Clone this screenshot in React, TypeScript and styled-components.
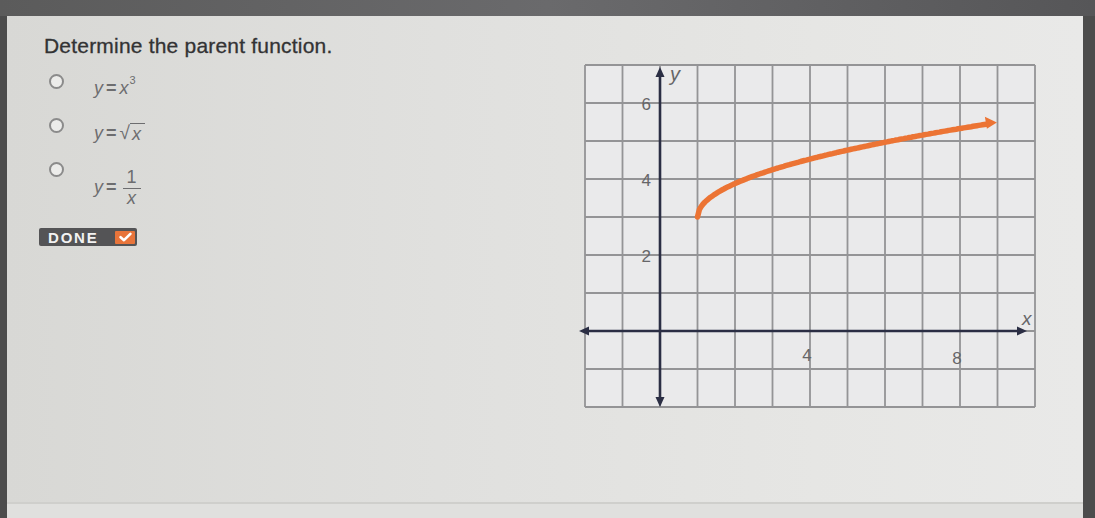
import React from 'react'
import styled, {createGlobalStyle} from 'styled-components'

const GlobalStyle = createGlobalStyle`
  html, body {
    margin: 0;
    padding: 0;
    background: #4a4a4a;
  }
  #root {
    height: 518px;
  }
`

const X0 = 7
const Y0 = 7
const UX = 37.5
const UY = 38

const px = (x: number) => X0 + (x + 2) * UX
const py = (y: number) => Y0 + (7 - y) * UY

// the curve as photographed sits a touch lower than sqrt(x - 1) + 3
const curve = (x: number) => 3 + 0.88 * Math.sqrt(x - 1)

const options = [
  {id: 'cubic', label: <CubicLabel />},
  {id: 'sqrt', label: <SqrtLabel />},
  {id: 'recip', label: <RecipLabel />}
]

export default function App() {
  return (
    <Frame>
      <GlobalStyle />
      <TopBar />
      <Body>
        <Edge $width={7} />
        <Panel>
          <Content>
            <Question>
              <Title>Determine the parent function.</Title>
              <Options>
                {options.map((option) => (
                  <OptionRow key={option.id} $tall={option.id === 'recip'}>
                    <Radio />
                    {option.label}
                  </OptionRow>
                ))}
              </Options>
              <DoneButton>
                DONE
                <Check>
                  <svg width="13" height="10" viewBox="0 0 13 10">
                    <path
                      d="M1.6 5.2 L5 8.2 L11.4 1.8"
                      fill="none"
                      stroke="#fff"
                      strokeWidth="2.6"
                      strokeLinecap="round"
                      strokeLinejoin="round"
                    />
                  </svg>
                </Check>
              </DoneButton>
            </Question>
            <GraphBox>
              <Graph />
            </GraphBox>
          </Content>
          <Footer />
        </Panel>
        <Edge $width={12} />
      </Body>
    </Frame>
  )
}

function CubicLabel() {
  return (
    <MathText>
      <Var>y</Var>
      <Eq>=</Eq>
      <Var>x</Var>
      <Sup>3</Sup>
    </MathText>
  )
}

function SqrtLabel() {
  return (
    <MathText>
      <Var>y</Var>
      <Eq>=</Eq>
      <Radical>√</Radical>
      <Radicand>
        <Var>x</Var>
      </Radicand>
    </MathText>
  )
}

function RecipLabel() {
  return (
    <MathText>
      <Var>y</Var>
      <Eq>=</Eq>
      <Fraction>
        <Numer>1</Numer>
        <Denom>
          <Var>x</Var>
        </Denom>
      </Fraction>
    </MathText>
  )
}

function Graph() {
  const cols = Array.from({length: 13}, (_, i) => i - 2)
  const rows = Array.from({length: 10}, (_, i) => i - 2)
  const pts: string[] = []
  for (let x = 1; x <= 8.7; x += 0.05) {
    pts.push(`${px(x).toFixed(1)},${py(curve(x)).toFixed(1)}`)
  }
  const endX = px(8.85)
  const endY = py(curve(8.85))
  const axis = '#2b2e44'
  return (
    <svg width="462" height="358" viewBox="0 0 462 358">
      <rect x={X0} y={Y0} width={12 * UX} height={9 * UY} fill="#eaeaeb" />
      {cols.map((c) => (
        <line
          key={`c${c}`}
          x1={px(c)}
          x2={px(c)}
          y1={Y0}
          y2={Y0 + 9 * UY}
          stroke="#949496"
          strokeWidth="1.8"
        />
      ))}
      {rows.map((r) => (
        <line
          key={`r${r}`}
          x1={X0}
          x2={X0 + 12 * UX}
          y1={py(r)}
          y2={py(r)}
          stroke="#949496"
          strokeWidth="1.8"
        />
      ))}
      <line x1={6} x2={443} y1={py(0)} y2={py(0)} stroke={axis} strokeWidth="2.6" />
      <path d={`M1 ${py(0)} L11 ${py(0) - 4.5} L11 ${py(0) + 4.5} Z`} fill={axis} />
      <path d={`M449 ${py(0)} L439 ${py(0) - 4.5} L439 ${py(0) + 4.5} Z`} fill={axis} />
      <line x1={px(0)} x2={px(0)} y1={15} y2={342} stroke={axis} strokeWidth="2.6" />
      <path d={`M${px(0)} 9 L${px(0) - 4.5} 19 L${px(0) + 4.5} 19 Z`} fill={axis} />
      <path d={`M${px(0)} 349 L${px(0) - 4.5} 339 L${px(0) + 4.5} 339 Z`} fill={axis} />

      <polyline
        points={pts.join(' ')}
        fill="none"
        stroke="#ec7434"
        strokeWidth="5.5"
        strokeLinecap="round"
        strokeLinejoin="round"
      />
      <path
        d={`M${endX + 5} ${endY - 0.8} L${endX - 7} ${endY - 6.5} L${endX - 5} ${endY + 5.5} Z`}
        fill="#ec7434"
      />

      <g fill="#666668" fontFamily="'Liberation Sans', Arial, sans-serif" fontSize="17">
        <text x={px(0) - 9} y={py(6) + 7} textAnchor="end">6</text>
        <text x={px(0) - 9} y={py(4) + 7} textAnchor="end">4</text>
        <text x={px(0) - 9} y={py(2) + 7} textAnchor="end">2</text>
        <text x={px(4) - 3} y={py(0) + 30} textAnchor="middle">4</text>
        <text x={px(8) - 3} y={py(0) + 33} textAnchor="middle">8</text>
        <text x={px(0) + 10} y={py(7) + 16} fontStyle="italic" fontSize="20">y</text>
        <text x={px(9.65)} y={py(0) - 6} fontStyle="italic" fontSize="19">x</text>
      </g>
    </svg>
  )
}

const Frame = styled.div`
  display: flex;
  flex-direction: column;
  width: 1095px;
  height: 518px;
  overflow: hidden;
  background: #4a4a4a;
`

const TopBar = styled.div`
  height: 16px;
  flex-shrink: 0;
  background: linear-gradient(90deg, #5b5b5b, #6a6a6c 50%, #565658);
`

const Body = styled.div`
  display: flex;
  flex: 1;
  min-height: 0;
`

const Edge = styled.div<{$width: number}>`
  width: ${(p) => p.$width}px;
  flex-shrink: 0;
  background: #4c4c4c;
`

const Panel = styled.div`
  flex: 1;
  display: flex;
  flex-direction: column;
  background: linear-gradient(90deg, #d8d8d5 0%, #e0e0de 40%, #e6e6e4 75%, #e9e9e8 100%);
`

const Content = styled.div`
  flex: 1;
  display: flex;
  align-items: flex-start;
  justify-content: space-between;
`

const Question = styled.div`
  display: flex;
  flex-direction: column;
  padding: 18px 0 0 37px;
`

const Title = styled.div`
  font-family: 'Liberation Sans', Arial, sans-serif;
  font-size: 21px;
  line-height: 24px;
  color: #333334;
  letter-spacing: 0.2px;
  -webkit-text-stroke: 0.3px #333334;
`

const Options = styled.div`
  display: flex;
  flex-direction: column;
  margin-top: 14px;
  gap: 14px;
`

const OptionRow = styled.div<{$tall?: boolean}>`
  display: flex;
  align-items: flex-start;
  height: ${(p) => (p.$tall ? 44 : 30)}px;
  padding-left: 5px;
`

const Radio = styled.span`
  width: 11px;
  height: 11px;
  border: 2px solid #8b8b8b;
  border-radius: 50%;
  background: #ececea;
  margin: 2px 30px 0 0;
  flex-shrink: 0;
`

const MathText = styled.span`
  display: inline-flex;
  align-items: center;
  font-family: 'Liberation Sans', Arial, sans-serif;
  font-size: 18px;
  color: #6d6d6f;
  padding-top: 6px;
`

const Var = styled.span`
  font-style: italic;
`

const Eq = styled.span`
  margin: 0 3px;
  font-weight: bold;
`

const Sup = styled.sup`
  font-size: 11px;
  align-self: flex-start;
  margin-top: -4px;
  margin-left: 1px;
`

const Radical = styled.span`
  font-size: 19px;
`

const Radicand = styled.span`
  border-top: 1.5px solid #6d6d6f;
  padding: 1px 4px 0 2px;
  line-height: 19px;
`

const Fraction = styled.span`
  display: inline-flex;
  flex-direction: column;
  align-items: center;
  margin-left: 3px;
  margin-top: 2px;
`

const Numer = styled.span`
  line-height: 19px;
  padding: 0 4px 1px;
  border-bottom: 1.5px solid #6d6d6f;
`

const Denom = styled.span`
  line-height: 19px;
`

const DoneButton = styled.div`
  display: flex;
  align-items: center;
  justify-content: space-between;
  width: 87px;
  height: 18px;
  margin-top: 24px;
  margin-left: -5px;
  padding: 0 2px 0 9px;
  background: #545456;
  border-radius: 2px;
  font-family: 'Liberation Sans', Arial, sans-serif;
  font-weight: bold;
  font-size: 15px;
  letter-spacing: 1.8px;
  color: #f2f2f2;
`

const Check = styled.span`
  display: flex;
  align-items: center;
  justify-content: center;
  width: 20px;
  height: 13px;
  background: #e8743a;
  border-radius: 1px;
`

const GraphBox = styled.div`
  padding-top: 42px;
  margin-right: 43px;
`

const Footer = styled.div`
  height: 14px;
  flex-shrink: 0;
  border-top: 2px solid #cfcfcc;
  background: #e0e0de;
`
